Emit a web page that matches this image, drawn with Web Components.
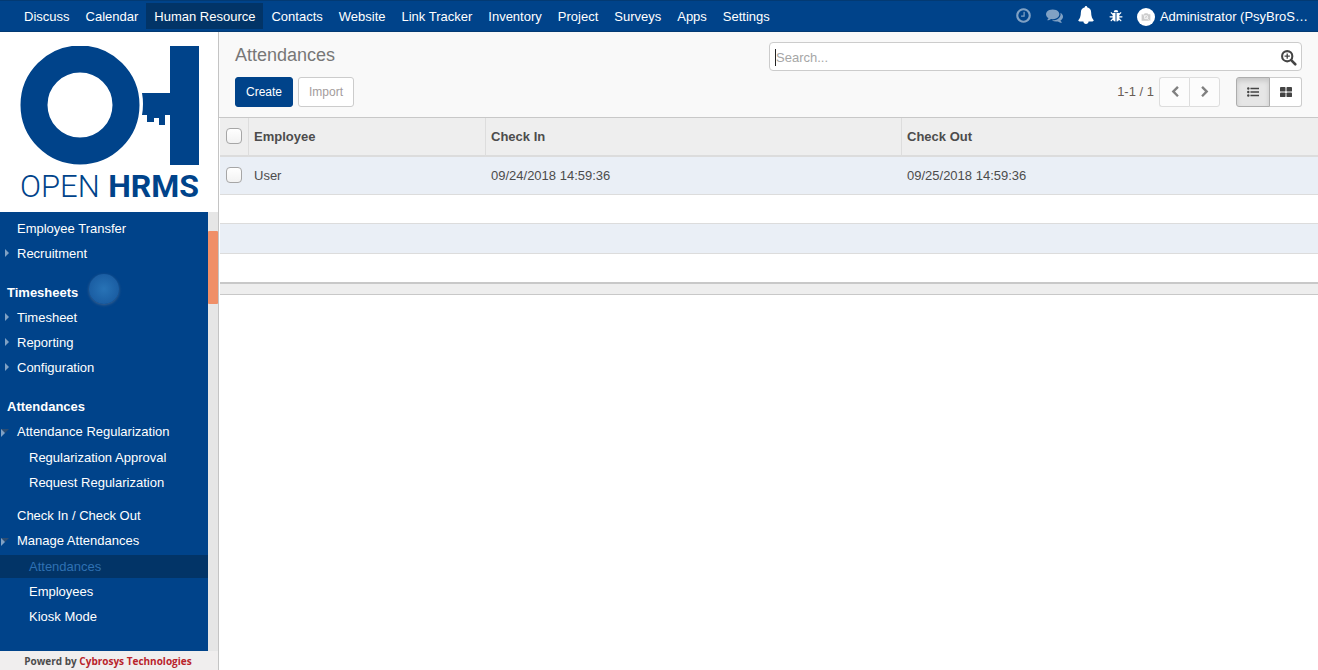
<!DOCTYPE html>
<html lang="en">
<head>
<meta charset="utf-8">
<title>Attendances - Open HRMS</title>
<style>
html, body { height: 100%; margin: 0; }
body { font: 13px/20px "Liberation Sans", Arial, sans-serif; color: #4c4c4c; background: #fff; }
</style>
</head>
<body>
<hr-app></hr-app>
<script>
const define = (name, html, setup) => customElements.define(name, class extends HTMLElement {
  connectedCallback() {
    if (this.shadowRoot) return;
    const template = document.createElement('template');
    template.innerHTML = html;
    this.attachShadow({ mode: 'open' }).append(template.content.cloneNode(true));
    if (setup) setup(this, this.shadowRoot);
  }
});

const icons = {
  clock: '<path d="M1024 544v448q0 14-9 23t-23 9h-320q-14 0-23-9t-9-23v-64q0-14 9-23t23-9h224v-352q0-14 9-23t23-9h64q14 0 23 9t9 23zm416 352q0-148-73-273t-198-198-273-73-273 73-198 198-73 273 73 273 198 198 273 73 273-73 198-198 73-273zm224 0q0 209-103 385.5t-279.5 279.5-385.5 103-385.5-103-279.5-279.5-103-385.5 103-385.5 279.5-279.5 385.5-103 385.5 103 279.5 279.5 103 385.5z"/>',
  comments: '<path d="M1408 768q0 139-94 257t-256.5 186.5-353.5 68.5q-86 0-176-16-124 88-278 128-36 9-86 16h-3q-11 0-20.5-8t-11.5-21q-1-3-1-6.5t.5-6.5 2-6l2.5-5 3.5-5.5 4-5 4.5-5 4-4.5q5-6 23-25t26-29.5 22.5-29 25-38.5 20.5-44q-124-72-195-177t-71-224q0-139 94-257t256.5-186.5 353.5-68.5 353.5 68.5 256.5 186.5 94 257zm384 256q0 120-71 224.5t-195 176.5q10 24 20.5 44t25 38.5 22.5 29 26 29.5 23 25q1 1 4 4.5t4.5 5 4 5 3.5 5.5l2.5 5 2 6 .5 6.5-1 6.5q-3 14-13 22t-22 7q-50-7-86-16-154-40-278-128-90 16-176 16-271 0-472-132 58 4 88 4 161 0 309-45t264-129q125-92 192-212t67-254q0-77-23-152 129 71 204 178t75 230z"/>',
  bell: '<path d="M896 0q60 0 91 34t21 94q190 40 294 180t106 332q6 340 80 500t176 268q0 52-38 90t-90 38h-384q0 106-75 181t-181 75-181-75-75-181h-384q-52 0-90-38t-38-90q102-108 176-268t80-500q2-192 106-332t294-180q-10-60 21-94t91-34z"/>',
  bug: '<path d="M600 430a296 296 0 0 1 592 0z"/><path d="M470 520h360v1090q-360-40-360-430zM962 520h360v660q0 390-360 430z"/><path d="M500 690L290 480M470 1000H130M510 1270L270 1500M1292 690l210-210M1322 1000h340M1282 1270l240 230" fill="none" stroke="currentColor" stroke-width="150" stroke-linecap="round"/>',
  camera: '<path d="M240 480h360l100-140h420l100 140h330v960H240z"/><circle cx="900" cy="940" r="300" fill="#fff"/><circle cx="900" cy="940" r="190"/><path d="M240 300l1330 1300" stroke="#fff" stroke-width="90"/>',
  search: '<circle cx="760" cy="760" r="540" fill="none" stroke="currentColor" stroke-width="220"/><path d="M1180 1180l430 430" stroke="currentColor" stroke-width="270" stroke-linecap="round"/><path d="M690 480h140v210h210v140H830v210H690V830H480V690h210z"/>',
  left: '<path d="M1427 301l-531 531 531 531q19 19 19 45t-19 45l-166 166q-19 19-45 19t-45-19l-742-742q-19-19-19-45t19-45l742-742q19-19 45-19t45 19l166 166q19 19 19 45t-19 45z"/>',
  right: '<path d="M1363 877l-742 742q-19 19-45 19t-45-19l-166-166q-19-19-19-45t19-45l531-531-531-531q-19-19-19-45t19-45l166-166q19-19 45-19t45 19l742 742q19 19 19 45t-19 45z"/>',
  list: '<circle cx="192" cy="384" r="180"/><circle cx="192" cy="896" r="180"/><circle cx="192" cy="1408" r="180"/><path d="M512 266h1280v236H512zM512 778h1280v236H512zM512 1290h1280v236H512z"/>',
  grid: '<rect x="128" y="256" width="704" height="576" rx="110"/><rect x="960" y="256" width="704" height="576" rx="110"/><rect x="128" y="960" width="704" height="576" rx="110"/><rect x="960" y="960" width="704" height="576" rx="110"/>'
};

define('hr-icon', `<style>
:host { display: block; width: 14px; height: 14px; }
svg { display: block; width: 100%; height: 100%; fill: currentColor; }
</style><svg viewBox="0 0 1792 1792" aria-hidden="true"></svg>`, (host, root) => {
  root.querySelector('svg').innerHTML = icons[host.getAttribute('name')];
});

define('hr-app', `<style>
:host { display: flex; flex-direction: column; min-height: 100vh; }
.body { display: flex; flex: 1; }
hr-content { flex: 1; min-width: 0; }
</style>
<hr-topbar></hr-topbar>
<div class="body"><hr-sidebar></hr-sidebar><hr-content></hr-content></div>`);

define('hr-topbar', `<style>
:host { display: flex; justify-content: space-between; box-sizing: border-box; height: 32px; padding: 2px 10px 2px 16px; background: #00438a; border-top: 1px solid #033a73; border-bottom: 1px solid #033a73; color: #fff; }
nav, .tools, .user { display: flex; align-items: center; }
a { color: inherit; text-decoration: none; padding: 4px 8px 2px; white-space: nowrap; }
a.current { background: #023467; }
.tools { gap: 14px; }
button { all: unset; display: block; cursor: pointer; }
.dim { opacity: .5; padding-bottom: 2px; }
.dim hr-icon { width: 17px; height: 17px; }
.bell { padding-bottom: 2px; }
.bell hr-icon { width: 18px; height: 18px; }
.user { display: flex; gap: 5px; padding-top: 2px; }
.avatar { display: grid; place-items: center; width: 18px; height: 18px; border-radius: 50%; background: #fff; color: #ccc; }
.avatar hr-icon { width: 12px; height: 12px; }
</style>
<nav aria-label="Applications">
<a href="#">Discuss</a><a href="#">Calendar</a><a href="#" class="current">Human Resource</a><a href="#">Contacts</a><a href="#">Website</a><a href="#">Link Tracker</a><a href="#">Inventory</a><a href="#">Project</a><a href="#">Surveys</a><a href="#">Apps</a><a href="#">Settings</a>
</nav>
<div class="tools">
<button class="dim" aria-label="Activities"><hr-icon name="clock"></hr-icon></button>
<button class="dim" aria-label="Conversations"><hr-icon name="comments"></hr-icon></button>
<button class="bell" aria-label="Notifications"><hr-icon name="bell"></hr-icon></button>
<button aria-label="Debug"><hr-icon name="bug"></hr-icon></button>
<button><span class="user"><span class="avatar"><hr-icon name="camera"></hr-icon></span>Administrator (PsyBroS…</span></button>
</div>`);

define('hr-logo', `<style>
:host { display: block; box-sizing: border-box; height: 180px; padding: 14px 19px 0 20px; background: #fff; color: #00438a; }
svg { display: block; width: 179px; height: 120px; }
.name { display: flex; justify-content: space-between; align-items: baseline; font: 300 31px/40px Roboto, sans-serif; }
b { font-size: 32px; font-weight: 700; }
</style>
<svg viewBox="0 0 179 120" fill="#00438a" aria-hidden="true">
<circle cx="60" cy="59" r="46" fill="none" stroke="#00438a" stroke-width="27"/>
<path d="M150 0h29v119h-29V69h-5v10h-6v-7h-5v4h-7v-7h-5q2-11 0-22h28z"/>
</svg>
<div class="name"><span>OPEN</span><b>HRMS</b></div>`);

define('hr-menu-item', `<style>
:host { display: block; }
a { position: relative; display: block; height: 23px; line-height: 23px; padding-left: 17px; color: #fff; text-decoration: none; }
:host([sub]) a { padding-left: 29px; }
:host([current]) a { background: #023467; color: #2f71b3; }
:host([arrow]) a::before { content: ""; position: absolute; left: 5px; top: 7px; border: 4px solid transparent; border-left-color: #80a1c4; border-right: 0; }
:host([arrow=open]) a::before { left: 1px; top: 9px; border-top-color: #2c4d73; border-right: 4px solid transparent; }
</style><a href="#"><slot></slot></a>`);

define('hr-sidebar', `<style>
:host { display: flex; flex-direction: column; width: 218px; border-right: 1px solid #c4c4c4; }
.scroll { display: flex; flex: 1; background: #00438a; }
nav { position: relative; display: flex; flex-direction: column; gap: 2px; flex: 1; padding: 5px 0; color: #fff; }
h2 { margin: 14px 0 0; padding-left: 7px; font-size: 13px; line-height: 23px; }
.sub { display: flex; flex-direction: column; gap: 2px; margin: 1px 0 8px; }
.pulse { position: absolute; left: 89px; top: 62px; width: 30px; height: 30px; border-radius: 50%; background: radial-gradient(circle, #2873b6, #15559b); box-shadow: 0 1px 3px #40658f; }
.track { width: 10px; padding-top: 19px; background: #e6e6e6; }
.thumb { height: 73px; border-radius: 1px; background: #f08f67; }
footer { height: 19px; background: #f0eeee; font: 700 10px/20px "Open Sans", sans-serif; text-align: center; padding-right: 2px; }
footer a { color: #b9242b; text-decoration: none; }
</style>
<hr-logo></hr-logo>
<div class="scroll">
<nav aria-label="Human Resource">
<hr-menu-item>Employee Transfer</hr-menu-item>
<hr-menu-item arrow>Recruitment</hr-menu-item>
<h2>Timesheets</h2>
<hr-menu-item arrow>Timesheet</hr-menu-item>
<hr-menu-item arrow>Reporting</hr-menu-item>
<hr-menu-item arrow>Configuration</hr-menu-item>
<h2>Attendances</h2>
<hr-menu-item arrow="open">Attendance Regularization</hr-menu-item>
<div class="sub"><hr-menu-item sub>Regularization Approval</hr-menu-item><hr-menu-item sub>Request Regularization</hr-menu-item></div>
<hr-menu-item>Check In / Check Out</hr-menu-item>
<hr-menu-item arrow="open">Manage Attendances</hr-menu-item>
<div class="sub"><hr-menu-item sub current>Attendances</hr-menu-item><hr-menu-item sub>Employees</hr-menu-item><hr-menu-item sub>Kiosk Mode</hr-menu-item></div>
<span class="pulse"></span>
</nav>
<div class="track"><div class="thumb"></div></div>
</div>
<footer>Powerd by <a href="#">Cybrosys Technologies</a></footer>`);

define('hr-content', `<style>:host { display: block; }</style>
<hr-control-panel></hr-control-panel><hr-list></hr-list>`);

define('hr-control-panel', `<style>
:host { display: flex; justify-content: space-between; box-sizing: border-box; height: 86px; padding: 10px 16px; background: #f9f9f9; border-bottom: 1px solid #c8c8c8; }
.left, .right { display: flex; flex-direction: column; gap: 6px; }
.right { width: 50%; max-width: 533px; }
h1 { margin: 0; font-size: 18px; line-height: 26px; height: 29px; font-weight: 400; color: #777; }
.row { display: flex; gap: 5px; }
button { box-sizing: border-box; display: grid; place-items: center; height: 30px; margin: 0; padding: 0 10px; border: 1px solid #ccc; border-radius: 3px; background: #fff; color: #a39c9c; font: 12px/18px "Liberation Sans", Arial, sans-serif; }
.primary { background: #00438a; border-color: #00438a; color: #fff; }
.search { display: flex; align-items: center; box-sizing: border-box; height: 29px; padding: 2px 4px 0 5px; border: 1px solid #ccc; border-radius: 4px; background: #fff; }
.search::before { content: ""; width: 1px; height: 17px; background: #222; }
input { flex: 1; min-width: 0; padding: 0; border: 0; outline: 0; background: none; font: 13px/20px "Liberation Sans", Arial, sans-serif; color: #4c4c4c; }
input::placeholder { color: #a6a6a6; opacity: 1; }
.search button { border: 0; padding: 0; height: 17px; background: none; color: #444; }
.search hr-icon { width: 17px; height: 17px; }
.pager { justify-content: flex-end; align-items: center; gap: 0; }
.count { margin-right: 5px; color: #6a5c55; }
.pager button { width: 31px; padding: 0; color: #808080; border-color: #ddd; background: #fcfcfc; }
.pager .first { width: 30px; border-radius: 3px 0 0 3px; border-right: 0; }
.pager .last { border-radius: 0 3px 3px 0; }
.pager .list { width: 34px; margin-left: 16px; background: #e6e6e6; border: 1px solid #adadad; color: #444; box-shadow: inset 0 3px 5px #0002; }
.pager .grid { width: 32px; border-color: #ccc; border-left: 0; color: #444; background: #fff; }
.pager hr-icon { width: 12px; height: 12px; }
.pager .grid hr-icon { width: 14px; height: 14px; }
</style>
<div class="left"><h1>Attendances</h1>
<div class="row"><button class="primary">Create</button><button>Import</button></div></div>
<div class="right">
<div class="search"><input type="text" aria-label="Search" placeholder="Search..."><button aria-label="Advanced search"><hr-icon name="search"></hr-icon></button></div>
<div class="row pager"><span class="count">1-1 / 1</span>
<button class="first" aria-label="Previous"><hr-icon name="left"></hr-icon></button><button class="last" aria-label="Next"><hr-icon name="right"></hr-icon></button>
<button class="first list" aria-label="List view"><hr-icon name="list"></hr-icon></button><button class="last grid" aria-label="Kanban view"><hr-icon name="grid"></hr-icon></button></div>
</div>`);

define('hr-list', `<style>
:host { display: block; padding-left: 1px; }
table { width: 100%; border-collapse: separate; border-spacing: 0; table-layout: fixed; }
.pick { width: 29px; } .employee { width: 237px; } .in { width: 416px; }
th, td { box-sizing: border-box; padding: 0 5px; text-align: left; }
th { height: 39px; background: #eee; border-bottom: 2px solid #dcdcdc; border-right: 1px solid #ddd; }
th:last-child { border-right: 0; }
td { height: 38px; border-bottom: 1px solid #dcdcdc; }
tbody tr:nth-child(odd) td { background: #eaeff6; }
.blank td { height: 29px; }
.blank:nth-child(3) td { height: 30px; }
.blank:last-child td { height: 28px; border-bottom: 0; }
tfoot td { height: 13px; background: #eee; border-top: 2px solid #c8c8c8; border-bottom: 1px solid #c8c8c8; }
input { appearance: none; display: block; box-sizing: border-box; width: 16px; height: 16px; margin: 0 1px 2px; border: 1px solid #a6a6a6; border-radius: 4px; background: linear-gradient(#fff, #f2f2f2); }
</style>
<table>
<colgroup><col class="pick"><col class="employee"><col class="in"><col></colgroup>
<thead><tr><th><input type="checkbox" aria-label="Select all"></th><th>Employee</th><th>Check In</th><th>Check Out</th></tr></thead>
<tbody><tr><td><input type="checkbox" aria-label="Select User"></td><td>User</td><td>09/24/2018 14:59:36</td><td>09/25/2018 14:59:36</td></tr>
<tr class="blank"><td colspan="4"></td></tr><tr class="blank"><td colspan="4"></td></tr><tr class="blank"><td colspan="4"></td></tr></tbody>
<tfoot><tr><td colspan="4"></td></tr></tfoot>
</table>`);
</script>
</body>
</html>
